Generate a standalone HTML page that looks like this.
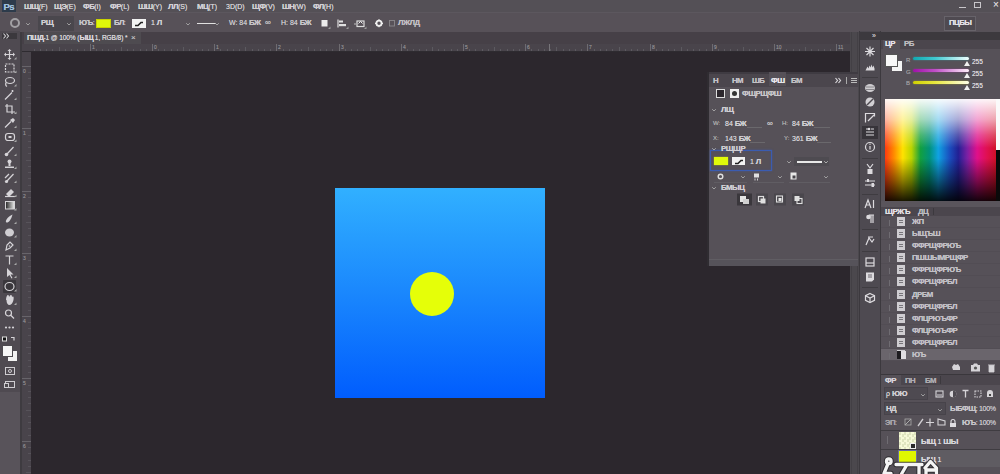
<!DOCTYPE html>
<html><head><meta charset="utf-8">
<style>
*{margin:0;padding:0;box-sizing:border-box}
html,body{width:1000px;height:474px;overflow:hidden;background:#2c272d;font-family:"Liberation Sans",sans-serif;position:relative}
.a{position:absolute}
.t{position:absolute;white-space:nowrap;text-shadow:0 0 .3px currentColor}
.c{font-size:1.12em;letter-spacing:-0.07em;font-weight:bold}
</style></head><body>
<div class="a" style="left:0px;top:0px;width:1000px;height:12px;background:#545056;"></div>
<div class="a" style="left:0px;top:12px;width:1000px;height:1px;background:#5c575e;"></div>
<div class="a" style="left:0px;top:13px;width:1000px;height:19px;background:#575158;"></div>
<div class="a" style="left:0px;top:32px;width:860px;height:20px;background:#464047;"></div>
<div class="a" style="left:0px;top:31px;width:22px;height:443px;background:#58535a;"></div>
<div class="a" style="left:0px;top:31px;width:20px;height:361px;background:#4f4a51;"></div>
<div class="a" style="left:22px;top:44px;width:9px;height:430px;background:#49444b;"></div>
<div class="a" style="left:22px;top:44px;width:828px;height:7px;background:#49444b;"></div>
<div class="a" style="left:31px;top:52px;width:819px;height:422px;background:#2c272d;"></div>
<div class="a" style="left:2px;top:0px;width:14px;height:12px;background:#2d3b4b;"></div>
<div class="t" style="left:3.5px;top:1.5px;font-size:9.5px;line-height:10.5px;color:#9fc0dc;font-weight:bold;letter-spacing:-0.6px;">Ps</div>
<div class="t" style="left:24px;top:3px;font-size:7px;line-height:8px;color:#d2d0d4;"><span class="c">ШЩ</span>(F)</div>
<div class="t" style="left:54px;top:3px;font-size:7px;line-height:8px;color:#d2d0d4;"><span class="c">ЩЭ</span>(E)</div>
<div class="t" style="left:83px;top:3px;font-size:7px;line-height:8px;color:#d2d0d4;"><span class="c">ФБ</span>(I)</div>
<div class="t" style="left:110px;top:3px;font-size:7px;line-height:8px;color:#d2d0d4;"><span class="c">ФР</span>(L)</div>
<div class="t" style="left:138px;top:3px;font-size:7px;line-height:8px;color:#d2d0d4;"><span class="c">ШШ</span>(Y)</div>
<div class="t" style="left:168px;top:3px;font-size:7px;line-height:8px;color:#d2d0d4;"><span class="c">ЛЛ</span>(S)</div>
<div class="t" style="left:197px;top:3px;font-size:7px;line-height:8px;color:#d2d0d4;"><span class="c">МЦ</span>(T)</div>
<div class="t" style="left:226px;top:3px;font-size:7px;line-height:8px;color:#d2d0d4;">3D(D)</div>
<div class="t" style="left:252px;top:3px;font-size:7px;line-height:8px;color:#d2d0d4;"><span class="c">ЩФ</span>(V)</div>
<div class="t" style="left:282px;top:3px;font-size:7px;line-height:8px;color:#d2d0d4;"><span class="c">ШН</span>(W)</div>
<div class="t" style="left:313px;top:3px;font-size:7px;line-height:8px;color:#d2d0d4;"><span class="c">ФЛ</span>(H)</div>
<div class="a" style="left:959px;top:7px;width:7px;height:1px;background:#c8c6ca;"></div>
<div class="a" style="left:974px;top:2px;width:7px;height:6px;background:none;border:1px solid #c8c6ca;"></div>
<div class="t" style="left:993px;top:-1px;font-size:10px;line-height:11px;color:#d0ced2;">×</div>
<div class="a" style="left:10px;top:18px;width:10px;height:10px;border-radius:50%;border:2.5px solid #a2a0a4;"></div>
<svg class="a" style="left:25px;top:19px" width="8" height="9" viewBox="0 0 8 9"><path d="M1.2 4.2L3 6L4.8 4.2" stroke="#aaa" stroke-width="0.9" fill="none"/></svg>
<div class="a" style="left:38px;top:16px;width:36px;height:15px;background:#4a474d;"></div>
<div class="t" style="left:41px;top:19px;font-size:7px;line-height:8px;color:#d0ced2;"><span class="c">РЩ</span></div>
<svg class="a" style="left:66px;top:19px" width="8" height="9" viewBox="0 0 8 9"><path d="M1.2 4.2L3 6L4.8 4.2" stroke="#aaa" stroke-width="0.9" fill="none"/></svg>
<div class="t" style="left:79px;top:19px;font-size:7px;line-height:8px;color:#c8c6ca;"><span class="c">ЮЪ</span>:</div>
<div class="a" style="left:96px;top:19px;width:15px;height:9px;background:#def80a;border:1px solid #c9d200;"></div>
<div class="t" style="left:114px;top:19px;font-size:7px;line-height:8px;color:#c8c6ca;"><span class="c">БЛ</span>:</div>
<div class="a" style="left:132px;top:19px;width:14px;height:9px;background:#f2f2f2;"></div>
<svg class="a" style="left:132px;top:19px;" width="14" height="9" viewBox="0 0 14 9"><path d="M3 6.5h3l3-3h2" stroke="#222" stroke-width="1.6" fill="none"/></svg>
<div class="t" style="left:151px;top:19px;font-size:7px;line-height:8px;color:#d0ced2;">1 <span class="c">Л</span></div>
<svg class="a" style="left:185px;top:19px" width="8" height="9" viewBox="0 0 8 9"><path d="M1.2 4.2L3 6L4.8 4.2" stroke="#aaa" stroke-width="0.9" fill="none"/></svg>
<div class="a" style="left:197px;top:23px;width:19px;height:1px;background:#e0e0e0;"></div>
<svg class="a" style="left:214px;top:19px" width="8" height="9" viewBox="0 0 8 9"><path d="M1.2 4.2L3 6L4.8 4.2" stroke="#aaa" stroke-width="0.9" fill="none"/></svg>
<div class="t" style="left:229px;top:19px;font-size:7px;line-height:8px;color:#c8c6ca;">W: 84 <span class="c">БЖ</span></div>
<div class="t" style="left:265px;top:18px;font-size:8px;line-height:9px;color:#c8c6ca;">∞</div>
<div class="t" style="left:281px;top:19px;font-size:7px;line-height:8px;color:#c8c6ca;">H: 84 <span class="c">БЖ</span></div>
<svg class="a" style="left:0px;top:0px;pointer-events:none;" width="1000" height="40" viewBox="0 0 1000 40"><rect x="321.5" y="20" width="6" height="6.5" fill="#ececec"/><path d="M328 29h2.5v-2.5z" fill="#999"/><path d="M338 19.5v8" stroke="#e0e0e0" stroke-width="1.2"/><rect x="339" y="20.5" width="4" height="2" fill="#e0e0e0"/><rect x="339" y="24" width="7" height="2.2" fill="#e0e0e0"/><path d="M346 29h2.5v-2.5z" fill="#999"/><rect x="357" y="21" width="7" height="5.5" fill="none" stroke="#dcdcdc" stroke-width="1.2"/><path d="M358.5 23.5l2-2 2 2" stroke="#eee" fill="none"/><circle cx="355" cy="24" r="0.8" fill="#ccc"/><path d="M364 29h2.5v-2.5z" fill="#999"/><circle cx="379" cy="23.3" r="2.6" fill="none" stroke="#f0f0f0" stroke-width="1.8"/><path d="M379 19.3v1.2M379 26.1v1.2M375 23.3h1.2M381.8 23.3h1.2" stroke="#f0f0f0" stroke-width="1.2"/><rect x="389.5" y="20.5" width="5" height="5.5" fill="none" stroke="#8a888c" stroke-width="0.9"/></svg>
<div class="t" style="left:398px;top:19px;font-size:7px;line-height:8px;color:#c0bec2;"><span class="c">ЛЖЛД</span></div>
<div class="a" style="left:944px;top:16px;width:32px;height:15px;background:#4f4a51;border:1px solid #67636a;"></div>
<div class="t" style="left:949px;top:19px;font-size:7px;line-height:8px;color:#e2e0e4;"><span class="c">ПЦБЫ</span></div>
<div class="a" style="left:24px;top:32px;width:117px;height:12px;background:#4e4b50;"></div>
<div class="t" style="left:27px;top:34px;font-size:6.6px;line-height:7.6px;color:#d8d6da;letter-spacing:-0.1px;"><span class="c">ПШД</span>-1 @ 100% (<span class="c">ЫЩ</span> 1, RGB/8) *</div>
<div class="t" style="left:131px;top:33px;font-size:8px;line-height:9px;color:#bbb;">×</div>
<div class="a" style="left:34px;top:49px;width:1px;height:2px;background:#5c5a60;"></div>
<div class="a" style="left:40px;top:49px;width:1px;height:2px;background:#5c5a60;"></div>
<div class="a" style="left:46px;top:49px;width:1px;height:2px;background:#5c5a60;"></div>
<div class="a" style="left:52px;top:49px;width:1px;height:2px;background:#5c5a60;"></div>
<div class="a" style="left:59px;top:47px;width:1px;height:4px;background:#5c5a60;"></div>
<div class="a" style="left:65px;top:49px;width:1px;height:2px;background:#5c5a60;"></div>
<div class="a" style="left:71px;top:49px;width:1px;height:2px;background:#5c5a60;"></div>
<div class="a" style="left:77px;top:49px;width:1px;height:2px;background:#5c5a60;"></div>
<div class="a" style="left:84px;top:49px;width:1px;height:2px;background:#5c5a60;"></div>
<div class="a" style="left:90px;top:44px;width:1px;height:7px;background:#6e6b70;"></div>
<div class="t" style="left:92px;top:44px;font-size:5px;line-height:6px;color:#8a888c;">1</div>
<div class="a" style="left:96px;top:49px;width:1px;height:2px;background:#5c5a60;"></div>
<div class="a" style="left:102px;top:49px;width:1px;height:2px;background:#5c5a60;"></div>
<div class="a" style="left:108px;top:49px;width:1px;height:2px;background:#5c5a60;"></div>
<div class="a" style="left:115px;top:49px;width:1px;height:2px;background:#5c5a60;"></div>
<div class="a" style="left:121px;top:47px;width:1px;height:4px;background:#5c5a60;"></div>
<div class="a" style="left:127px;top:49px;width:1px;height:2px;background:#5c5a60;"></div>
<div class="a" style="left:133px;top:49px;width:1px;height:2px;background:#5c5a60;"></div>
<div class="a" style="left:140px;top:49px;width:1px;height:2px;background:#5c5a60;"></div>
<div class="a" style="left:146px;top:49px;width:1px;height:2px;background:#5c5a60;"></div>
<div class="a" style="left:152px;top:44px;width:1px;height:7px;background:#6e6b70;"></div>
<div class="t" style="left:154px;top:44px;font-size:5px;line-height:6px;color:#8a888c;">0</div>
<div class="a" style="left:158px;top:49px;width:1px;height:2px;background:#5c5a60;"></div>
<div class="a" style="left:164px;top:49px;width:1px;height:2px;background:#5c5a60;"></div>
<div class="a" style="left:171px;top:49px;width:1px;height:2px;background:#5c5a60;"></div>
<div class="a" style="left:177px;top:49px;width:1px;height:2px;background:#5c5a60;"></div>
<div class="a" style="left:183px;top:47px;width:1px;height:4px;background:#5c5a60;"></div>
<div class="a" style="left:189px;top:49px;width:1px;height:2px;background:#5c5a60;"></div>
<div class="a" style="left:196px;top:49px;width:1px;height:2px;background:#5c5a60;"></div>
<div class="a" style="left:202px;top:49px;width:1px;height:2px;background:#5c5a60;"></div>
<div class="a" style="left:208px;top:49px;width:1px;height:2px;background:#5c5a60;"></div>
<div class="a" style="left:214px;top:44px;width:1px;height:7px;background:#6e6b70;"></div>
<div class="t" style="left:216px;top:44px;font-size:5px;line-height:6px;color:#8a888c;">1</div>
<div class="a" style="left:220px;top:49px;width:1px;height:2px;background:#5c5a60;"></div>
<div class="a" style="left:227px;top:49px;width:1px;height:2px;background:#5c5a60;"></div>
<div class="a" style="left:233px;top:49px;width:1px;height:2px;background:#5c5a60;"></div>
<div class="a" style="left:239px;top:49px;width:1px;height:2px;background:#5c5a60;"></div>
<div class="a" style="left:245px;top:47px;width:1px;height:4px;background:#5c5a60;"></div>
<div class="a" style="left:252px;top:49px;width:1px;height:2px;background:#5c5a60;"></div>
<div class="a" style="left:258px;top:49px;width:1px;height:2px;background:#5c5a60;"></div>
<div class="a" style="left:264px;top:49px;width:1px;height:2px;background:#5c5a60;"></div>
<div class="a" style="left:270px;top:49px;width:1px;height:2px;background:#5c5a60;"></div>
<div class="a" style="left:276px;top:44px;width:1px;height:7px;background:#6e6b70;"></div>
<div class="t" style="left:278px;top:44px;font-size:5px;line-height:6px;color:#8a888c;">2</div>
<div class="a" style="left:283px;top:49px;width:1px;height:2px;background:#5c5a60;"></div>
<div class="a" style="left:289px;top:49px;width:1px;height:2px;background:#5c5a60;"></div>
<div class="a" style="left:295px;top:49px;width:1px;height:2px;background:#5c5a60;"></div>
<div class="a" style="left:301px;top:49px;width:1px;height:2px;background:#5c5a60;"></div>
<div class="a" style="left:308px;top:47px;width:1px;height:4px;background:#5c5a60;"></div>
<div class="a" style="left:314px;top:49px;width:1px;height:2px;background:#5c5a60;"></div>
<div class="a" style="left:320px;top:49px;width:1px;height:2px;background:#5c5a60;"></div>
<div class="a" style="left:326px;top:49px;width:1px;height:2px;background:#5c5a60;"></div>
<div class="a" style="left:332px;top:49px;width:1px;height:2px;background:#5c5a60;"></div>
<div class="a" style="left:339px;top:44px;width:1px;height:7px;background:#6e6b70;"></div>
<div class="t" style="left:341px;top:44px;font-size:5px;line-height:6px;color:#8a888c;">3</div>
<div class="a" style="left:345px;top:49px;width:1px;height:2px;background:#5c5a60;"></div>
<div class="a" style="left:351px;top:49px;width:1px;height:2px;background:#5c5a60;"></div>
<div class="a" style="left:357px;top:49px;width:1px;height:2px;background:#5c5a60;"></div>
<div class="a" style="left:363px;top:49px;width:1px;height:2px;background:#5c5a60;"></div>
<div class="a" style="left:370px;top:47px;width:1px;height:4px;background:#5c5a60;"></div>
<div class="a" style="left:376px;top:49px;width:1px;height:2px;background:#5c5a60;"></div>
<div class="a" style="left:382px;top:49px;width:1px;height:2px;background:#5c5a60;"></div>
<div class="a" style="left:388px;top:49px;width:1px;height:2px;background:#5c5a60;"></div>
<div class="a" style="left:395px;top:49px;width:1px;height:2px;background:#5c5a60;"></div>
<div class="a" style="left:401px;top:44px;width:1px;height:7px;background:#6e6b70;"></div>
<div class="t" style="left:403px;top:44px;font-size:5px;line-height:6px;color:#8a888c;">4</div>
<div class="a" style="left:407px;top:49px;width:1px;height:2px;background:#5c5a60;"></div>
<div class="a" style="left:413px;top:49px;width:1px;height:2px;background:#5c5a60;"></div>
<div class="a" style="left:419px;top:49px;width:1px;height:2px;background:#5c5a60;"></div>
<div class="a" style="left:426px;top:49px;width:1px;height:2px;background:#5c5a60;"></div>
<div class="a" style="left:432px;top:47px;width:1px;height:4px;background:#5c5a60;"></div>
<div class="a" style="left:438px;top:49px;width:1px;height:2px;background:#5c5a60;"></div>
<div class="a" style="left:444px;top:49px;width:1px;height:2px;background:#5c5a60;"></div>
<div class="a" style="left:451px;top:49px;width:1px;height:2px;background:#5c5a60;"></div>
<div class="a" style="left:457px;top:49px;width:1px;height:2px;background:#5c5a60;"></div>
<div class="a" style="left:463px;top:44px;width:1px;height:7px;background:#6e6b70;"></div>
<div class="t" style="left:465px;top:44px;font-size:5px;line-height:6px;color:#8a888c;">5</div>
<div class="a" style="left:469px;top:49px;width:1px;height:2px;background:#5c5a60;"></div>
<div class="a" style="left:475px;top:49px;width:1px;height:2px;background:#5c5a60;"></div>
<div class="a" style="left:482px;top:49px;width:1px;height:2px;background:#5c5a60;"></div>
<div class="a" style="left:488px;top:49px;width:1px;height:2px;background:#5c5a60;"></div>
<div class="a" style="left:494px;top:47px;width:1px;height:4px;background:#5c5a60;"></div>
<div class="a" style="left:500px;top:49px;width:1px;height:2px;background:#5c5a60;"></div>
<div class="a" style="left:507px;top:49px;width:1px;height:2px;background:#5c5a60;"></div>
<div class="a" style="left:513px;top:49px;width:1px;height:2px;background:#5c5a60;"></div>
<div class="a" style="left:519px;top:49px;width:1px;height:2px;background:#5c5a60;"></div>
<div class="a" style="left:525px;top:44px;width:1px;height:7px;background:#6e6b70;"></div>
<div class="t" style="left:527px;top:44px;font-size:5px;line-height:6px;color:#8a888c;">6</div>
<div class="a" style="left:531px;top:49px;width:1px;height:2px;background:#5c5a60;"></div>
<div class="a" style="left:538px;top:49px;width:1px;height:2px;background:#5c5a60;"></div>
<div class="a" style="left:544px;top:49px;width:1px;height:2px;background:#5c5a60;"></div>
<div class="a" style="left:550px;top:49px;width:1px;height:2px;background:#5c5a60;"></div>
<div class="a" style="left:556px;top:47px;width:1px;height:4px;background:#5c5a60;"></div>
<div class="a" style="left:563px;top:49px;width:1px;height:2px;background:#5c5a60;"></div>
<div class="a" style="left:569px;top:49px;width:1px;height:2px;background:#5c5a60;"></div>
<div class="a" style="left:575px;top:49px;width:1px;height:2px;background:#5c5a60;"></div>
<div class="a" style="left:581px;top:49px;width:1px;height:2px;background:#5c5a60;"></div>
<div class="a" style="left:587px;top:44px;width:1px;height:7px;background:#6e6b70;"></div>
<div class="t" style="left:589px;top:44px;font-size:5px;line-height:6px;color:#8a888c;">7</div>
<div class="a" style="left:594px;top:49px;width:1px;height:2px;background:#5c5a60;"></div>
<div class="a" style="left:600px;top:49px;width:1px;height:2px;background:#5c5a60;"></div>
<div class="a" style="left:606px;top:49px;width:1px;height:2px;background:#5c5a60;"></div>
<div class="a" style="left:612px;top:49px;width:1px;height:2px;background:#5c5a60;"></div>
<div class="a" style="left:619px;top:47px;width:1px;height:4px;background:#5c5a60;"></div>
<div class="a" style="left:625px;top:49px;width:1px;height:2px;background:#5c5a60;"></div>
<div class="a" style="left:631px;top:49px;width:1px;height:2px;background:#5c5a60;"></div>
<div class="a" style="left:637px;top:49px;width:1px;height:2px;background:#5c5a60;"></div>
<div class="a" style="left:643px;top:49px;width:1px;height:2px;background:#5c5a60;"></div>
<div class="a" style="left:650px;top:44px;width:1px;height:7px;background:#6e6b70;"></div>
<div class="t" style="left:652px;top:44px;font-size:5px;line-height:6px;color:#8a888c;">8</div>
<div class="a" style="left:656px;top:49px;width:1px;height:2px;background:#5c5a60;"></div>
<div class="a" style="left:662px;top:49px;width:1px;height:2px;background:#5c5a60;"></div>
<div class="a" style="left:668px;top:49px;width:1px;height:2px;background:#5c5a60;"></div>
<div class="a" style="left:674px;top:49px;width:1px;height:2px;background:#5c5a60;"></div>
<div class="a" style="left:681px;top:47px;width:1px;height:4px;background:#5c5a60;"></div>
<div class="a" style="left:687px;top:49px;width:1px;height:2px;background:#5c5a60;"></div>
<div class="a" style="left:693px;top:49px;width:1px;height:2px;background:#5c5a60;"></div>
<div class="a" style="left:699px;top:49px;width:1px;height:2px;background:#5c5a60;"></div>
<div class="a" style="left:706px;top:49px;width:1px;height:2px;background:#5c5a60;"></div>
<div class="a" style="left:712px;top:44px;width:1px;height:7px;background:#6e6b70;"></div>
<div class="t" style="left:714px;top:44px;font-size:5px;line-height:6px;color:#8a888c;">9</div>
<div class="a" style="left:718px;top:49px;width:1px;height:2px;background:#5c5a60;"></div>
<div class="a" style="left:724px;top:49px;width:1px;height:2px;background:#5c5a60;"></div>
<div class="a" style="left:730px;top:49px;width:1px;height:2px;background:#5c5a60;"></div>
<div class="a" style="left:737px;top:49px;width:1px;height:2px;background:#5c5a60;"></div>
<div class="a" style="left:743px;top:47px;width:1px;height:4px;background:#5c5a60;"></div>
<div class="a" style="left:749px;top:49px;width:1px;height:2px;background:#5c5a60;"></div>
<div class="a" style="left:755px;top:49px;width:1px;height:2px;background:#5c5a60;"></div>
<div class="a" style="left:762px;top:49px;width:1px;height:2px;background:#5c5a60;"></div>
<div class="a" style="left:768px;top:49px;width:1px;height:2px;background:#5c5a60;"></div>
<div class="a" style="left:774px;top:44px;width:1px;height:7px;background:#6e6b70;"></div>
<div class="t" style="left:776px;top:44px;font-size:5px;line-height:6px;color:#8a888c;">10</div>
<div class="a" style="left:780px;top:49px;width:1px;height:2px;background:#5c5a60;"></div>
<div class="a" style="left:786px;top:49px;width:1px;height:2px;background:#5c5a60;"></div>
<div class="a" style="left:793px;top:49px;width:1px;height:2px;background:#5c5a60;"></div>
<div class="a" style="left:799px;top:49px;width:1px;height:2px;background:#5c5a60;"></div>
<div class="a" style="left:805px;top:47px;width:1px;height:4px;background:#5c5a60;"></div>
<div class="a" style="left:811px;top:49px;width:1px;height:2px;background:#5c5a60;"></div>
<div class="a" style="left:818px;top:49px;width:1px;height:2px;background:#5c5a60;"></div>
<div class="a" style="left:824px;top:49px;width:1px;height:2px;background:#5c5a60;"></div>
<div class="a" style="left:830px;top:49px;width:1px;height:2px;background:#5c5a60;"></div>
<div class="a" style="left:836px;top:44px;width:1px;height:7px;background:#6e6b70;"></div>
<div class="t" style="left:838px;top:44px;font-size:5px;line-height:6px;color:#8a888c;">11</div>
<div class="a" style="left:842px;top:49px;width:1px;height:2px;background:#5c5a60;"></div>
<div class="a" style="left:549px;top:44px;width:1px;height:7px;background:#77757a;"></div>
<div class="a" style="left:22px;top:51px;width:828px;height:1px;background:#2e2b30;"></div>
<div class="a" style="left:22px;top:66px;width:9px;height:1px;background:#67646a;"></div>
<div class="t" style="left:23px;top:68px;font-size:5px;line-height:6px;color:#8a888c;">0</div>
<div class="a" style="left:28px;top:72px;width:3px;height:1px;background:#57535a;"></div>
<div class="a" style="left:28px;top:78px;width:3px;height:1px;background:#57535a;"></div>
<div class="a" style="left:28px;top:85px;width:3px;height:1px;background:#57535a;"></div>
<div class="a" style="left:28px;top:91px;width:3px;height:1px;background:#57535a;"></div>
<div class="a" style="left:26px;top:97px;width:5px;height:1px;background:#57535a;"></div>
<div class="a" style="left:28px;top:103px;width:3px;height:1px;background:#57535a;"></div>
<div class="a" style="left:28px;top:110px;width:3px;height:1px;background:#57535a;"></div>
<div class="a" style="left:28px;top:116px;width:3px;height:1px;background:#57535a;"></div>
<div class="a" style="left:28px;top:122px;width:3px;height:1px;background:#57535a;"></div>
<div class="a" style="left:22px;top:128px;width:9px;height:1px;background:#67646a;"></div>
<div class="t" style="left:23px;top:130px;font-size:5px;line-height:6px;color:#8a888c;">1</div>
<div class="a" style="left:28px;top:135px;width:3px;height:1px;background:#57535a;"></div>
<div class="a" style="left:28px;top:141px;width:3px;height:1px;background:#57535a;"></div>
<div class="a" style="left:28px;top:147px;width:3px;height:1px;background:#57535a;"></div>
<div class="a" style="left:28px;top:153px;width:3px;height:1px;background:#57535a;"></div>
<div class="a" style="left:26px;top:160px;width:5px;height:1px;background:#57535a;"></div>
<div class="a" style="left:28px;top:166px;width:3px;height:1px;background:#57535a;"></div>
<div class="a" style="left:28px;top:172px;width:3px;height:1px;background:#57535a;"></div>
<div class="a" style="left:28px;top:178px;width:3px;height:1px;background:#57535a;"></div>
<div class="a" style="left:28px;top:185px;width:3px;height:1px;background:#57535a;"></div>
<div class="a" style="left:22px;top:191px;width:9px;height:1px;background:#67646a;"></div>
<div class="t" style="left:23px;top:193px;font-size:5px;line-height:6px;color:#8a888c;">2</div>
<div class="a" style="left:28px;top:197px;width:3px;height:1px;background:#57535a;"></div>
<div class="a" style="left:28px;top:203px;width:3px;height:1px;background:#57535a;"></div>
<div class="a" style="left:28px;top:210px;width:3px;height:1px;background:#57535a;"></div>
<div class="a" style="left:28px;top:216px;width:3px;height:1px;background:#57535a;"></div>
<div class="a" style="left:26px;top:222px;width:5px;height:1px;background:#57535a;"></div>
<div class="a" style="left:28px;top:228px;width:3px;height:1px;background:#57535a;"></div>
<div class="a" style="left:28px;top:235px;width:3px;height:1px;background:#57535a;"></div>
<div class="a" style="left:28px;top:241px;width:3px;height:1px;background:#57535a;"></div>
<div class="a" style="left:28px;top:247px;width:3px;height:1px;background:#57535a;"></div>
<div class="a" style="left:22px;top:253px;width:9px;height:1px;background:#67646a;"></div>
<div class="t" style="left:23px;top:255px;font-size:5px;line-height:6px;color:#8a888c;">3</div>
<div class="a" style="left:28px;top:260px;width:3px;height:1px;background:#57535a;"></div>
<div class="a" style="left:28px;top:266px;width:3px;height:1px;background:#57535a;"></div>
<div class="a" style="left:28px;top:272px;width:3px;height:1px;background:#57535a;"></div>
<div class="a" style="left:28px;top:278px;width:3px;height:1px;background:#57535a;"></div>
<div class="a" style="left:26px;top:285px;width:5px;height:1px;background:#57535a;"></div>
<div class="a" style="left:28px;top:291px;width:3px;height:1px;background:#57535a;"></div>
<div class="a" style="left:28px;top:297px;width:3px;height:1px;background:#57535a;"></div>
<div class="a" style="left:28px;top:303px;width:3px;height:1px;background:#57535a;"></div>
<div class="a" style="left:28px;top:310px;width:3px;height:1px;background:#57535a;"></div>
<div class="a" style="left:22px;top:316px;width:9px;height:1px;background:#67646a;"></div>
<div class="t" style="left:23px;top:318px;font-size:5px;line-height:6px;color:#8a888c;">4</div>
<div class="a" style="left:28px;top:322px;width:3px;height:1px;background:#57535a;"></div>
<div class="a" style="left:28px;top:328px;width:3px;height:1px;background:#57535a;"></div>
<div class="a" style="left:28px;top:335px;width:3px;height:1px;background:#57535a;"></div>
<div class="a" style="left:28px;top:341px;width:3px;height:1px;background:#57535a;"></div>
<div class="a" style="left:26px;top:347px;width:5px;height:1px;background:#57535a;"></div>
<div class="a" style="left:28px;top:353px;width:3px;height:1px;background:#57535a;"></div>
<div class="a" style="left:28px;top:360px;width:3px;height:1px;background:#57535a;"></div>
<div class="a" style="left:28px;top:366px;width:3px;height:1px;background:#57535a;"></div>
<div class="a" style="left:28px;top:372px;width:3px;height:1px;background:#57535a;"></div>
<div class="a" style="left:22px;top:378px;width:9px;height:1px;background:#67646a;"></div>
<div class="t" style="left:23px;top:380px;font-size:5px;line-height:6px;color:#8a888c;">5</div>
<div class="a" style="left:28px;top:385px;width:3px;height:1px;background:#57535a;"></div>
<div class="a" style="left:28px;top:391px;width:3px;height:1px;background:#57535a;"></div>
<div class="a" style="left:28px;top:397px;width:3px;height:1px;background:#57535a;"></div>
<div class="a" style="left:28px;top:403px;width:3px;height:1px;background:#57535a;"></div>
<div class="a" style="left:26px;top:410px;width:5px;height:1px;background:#57535a;"></div>
<div class="a" style="left:28px;top:416px;width:3px;height:1px;background:#57535a;"></div>
<div class="a" style="left:28px;top:422px;width:3px;height:1px;background:#57535a;"></div>
<div class="a" style="left:28px;top:428px;width:3px;height:1px;background:#57535a;"></div>
<div class="a" style="left:28px;top:435px;width:3px;height:1px;background:#57535a;"></div>
<div class="a" style="left:22px;top:441px;width:9px;height:1px;background:#67646a;"></div>
<div class="t" style="left:23px;top:443px;font-size:5px;line-height:6px;color:#8a888c;">6</div>
<div class="a" style="left:28px;top:447px;width:3px;height:1px;background:#57535a;"></div>
<div class="a" style="left:28px;top:453px;width:3px;height:1px;background:#57535a;"></div>
<div class="a" style="left:28px;top:460px;width:3px;height:1px;background:#57535a;"></div>
<div class="a" style="left:28px;top:466px;width:3px;height:1px;background:#57535a;"></div>
<div class="a" style="left:26px;top:472px;width:5px;height:1px;background:#57535a;"></div>
<div class="a" style="left:335px;top:188px;width:210px;height:210px;background:linear-gradient(#31b0ff,#1a87fd 50%,#005dfe);"></div>
<div class="a" style="left:410px;top:272px;width:44px;height:44px;border-radius:50%;background:#e5ff08"></div>
<div class="a" style="left:2px;top:33px;width:15px;height:6px;background:#3b383d;"></div>
<svg class="a" style="left:0px;top:30px;" width="20" height="12" viewBox="0 0 20 12"><path d="M3.5 3.5l2 2.5-2 2.5M6.5 3.5l2 2.5-2 2.5" stroke="#d0ced2" stroke-width="1.1" fill="none"/></svg>
<div class="a" style="left:20px;top:32px;width:2px;height:442px;background:#3e3b40;"></div>
<div class="a" style="left:3px;top:280px;width:13px;height:13px;background:#3a373c;border-radius:1px;"></div>
<svg class="a" style="left:0px;top:0px;" width="31" height="474" viewBox="0 0 31 474"><defs><linearGradient id="gr"><stop offset="0" stop-color="#222"/><stop offset="1" stop-color="#eee"/></linearGradient></defs><path d="M5 54.5H14M9.5 50.0V59.0" stroke="#d6d4d8" fill="none" stroke-width="1.2" stroke-width="1.6"/><path d="M9.5 49.0l-2 2h4zM9.5 60.0l-2-2h4zM4 54.5l2-2v4zM15 54.5l-2-2v4z" fill="#d6d4d8"/><rect x="5.5" y="64" width="8.5" height="8" stroke="#d6d4d8" fill="none" stroke-width="1.2" stroke-dasharray="2 1"/><ellipse cx="10" cy="80.5" rx="4.5" ry="3" stroke="#d6d4d8" fill="none" stroke-width="1.2"/><path d="M6 82.5q-1 3 1 4" stroke="#d6d4d8" fill="none" stroke-width="1.2"/><path d="M5 99.5L12 92.5" stroke="#d6d4d8" fill="none" stroke-width="1.2" stroke-width="2"/><path d="M12.5 90v2M11.5 91h2" stroke="#d6d4d8" fill="none" stroke-width="1.2"/><path d="M7 104V112H15M5 106H12V114" stroke="#d6d4d8" fill="none" stroke-width="1.2"/><path d="M5 127.5L11 121.5" stroke="#d6d4d8" fill="none" stroke-width="1.2" stroke-width="2"/><path d="M10 120l3-2 2 2-2 3z" fill="#d6d4d8"/><rect x="5.5" y="133.5" width="9" height="7" rx="2.5" stroke="#d6d4d8" fill="none" stroke-width="1.2" stroke-width="1.5"/><rect x="8.5" y="136" width="3" height="2" fill="#d6d4d8"/><path d="M7 154L13.5 147" stroke="#d6d4d8" fill="none" stroke-width="1.2" stroke-width="1.6"/><circle cx="6.5" cy="154.5" r="1.8" fill="#d6d4d8"/><circle cx="9.5" cy="161.5" r="2" fill="#d6d4d8"/><path d="M5 166.5h9v1.5h-9z M8.5 163h2v3h-2z" fill="#d6d4d8"/><path d="M7 181L13.5 174" stroke="#d6d4d8" fill="none" stroke-width="1.2" stroke-width="1.6"/><path d="M5 178L9 174" stroke="#d6d4d8" fill="none" stroke-width="1.2"/><circle cx="6.5" cy="181.5" r="1.6" fill="#d6d4d8"/><path d="M6 194l5-5 3 3-5 5z" fill="#d6d4d8"/><path d="M5 196.5H15" stroke="#d6d4d8" fill="none" stroke-width="1.2"/><rect x="5.5" y="201.5" width="9" height="7.5" fill="url(#gr)" stroke="#d6d4d8" stroke-width="1"/><path d="M12.5 214.5C9 216 5 220 6 222 7 224 11 221 12.5 214.5z" fill="#d6d4d8"/><ellipse cx="9.5" cy="232.5" rx="4.5" ry="4" fill="#cfcdd1"/><path d="M6 250l1-5 3-3 3 3-3 3z" stroke="#d6d4d8" fill="none" stroke-width="1.2"/><circle cx="9.5" cy="246" r="0.8" fill="#d6d4d8"/><path d="M5.5 256h8M9.5 256v8.5" stroke="#d6d4d8" fill="none" stroke-width="1.2" stroke-width="1.5"/><path d="M7 268v9l2.5-2 2 3.5 1-.5-2-3.5h3z" fill="#d6d4d8"/><ellipse cx="9.5" cy="286.5" rx="4.5" ry="4" stroke="#d6d4d8" fill="none" stroke-width="1.2" stroke-width="1.5"/><path d="M6 300c0-3 1-5 2-5s1 2 1 2 1-2 2-2 1 2 1 2 1-1 1.5 0 0 5-2 7-5 1-5-4z" fill="#d6d4d8"/><circle cx="8.5" cy="313" r="3" stroke="#d6d4d8" fill="none" stroke-width="1.2" stroke-width="1.4"/><path d="M10.5 315l3.5 3.5" stroke="#d6d4d8" fill="none" stroke-width="1.2" stroke-width="1.6"/><circle cx="6" cy="327.5" r="1.1" fill="#d6d4d8"/><circle cx="9.5" cy="327.5" r="1.1" fill="#d6d4d8"/><circle cx="13" cy="327.5" r="1.1" fill="#d6d4d8"/><rect x="2.5" y="337.0" width="4" height="4" fill="#111" stroke="#ddd" stroke-width="1"/><path d="M11 337.5h3v3" stroke="#d6d4d8" fill="none" stroke-width="1.2"/><path d="M14 59.5h2.5v-2.5z" fill="#aaa"/><path d="M14 73h2.5v-2.5z" fill="#aaa"/><path d="M14 86.5h2.5v-2.5z" fill="#aaa"/><path d="M14 100h2.5v-2.5z" fill="#aaa"/><path d="M14 114h2.5v-2.5z" fill="#aaa"/><path d="M14 128h2.5v-2.5z" fill="#aaa"/><path d="M14 142h2.5v-2.5z" fill="#aaa"/><path d="M14 156h2.5v-2.5z" fill="#aaa"/><path d="M14 169h2.5v-2.5z" fill="#aaa"/><path d="M14 183h2.5v-2.5z" fill="#aaa"/><path d="M14 197h2.5v-2.5z" fill="#aaa"/><path d="M14 210.5h2.5v-2.5z" fill="#aaa"/><path d="M14 224h2.5v-2.5z" fill="#aaa"/><path d="M14 237.5h2.5v-2.5z" fill="#aaa"/><path d="M14 251h2.5v-2.5z" fill="#aaa"/><path d="M14 265h2.5v-2.5z" fill="#aaa"/><path d="M14 278h2.5v-2.5z" fill="#aaa"/><path d="M14 291.5h2.5v-2.5z" fill="#aaa"/><path d="M14 305h2.5v-2.5z" fill="#aaa"/></svg>
<div class="a" style="left:8px;top:351px;width:9px;height:10px;background:#f2f2f2;"></div>
<div class="a" style="left:3px;top:346px;width:9px;height:10px;background:#f6f6f6;outline:1px solid #4d4a4f;"></div>
<div class="a" style="left:5px;top:367px;width:10px;height:8px;background:none;border:1px solid #cfcdd1;"></div>
<div class="a" style="left:8px;top:369px;width:4px;height:4px;border:1px solid #cfcdd1;border-radius:50%"></div>
<div class="a" style="left:5px;top:381px;width:10px;height:7px;background:none;border:1px solid #cfcdd1;"></div>
<div class="a" style="left:4px;top:383px;width:5px;height:5px;background:#4d4a4f;border:1px solid #cfcdd1;"></div>
<div class="a" style="left:850px;top:32px;width:10px;height:442px;background:#4b484d;"></div>
<div class="a" style="left:851px;top:32px;width:1px;height:442px;background:#434045;"></div>
<div class="a" style="left:857px;top:32px;width:1px;height:442px;background:#434045;"></div>
<div class="a" style="left:707px;top:72px;width:2px;height:194px;background:#2f2c31;"></div>
<div class="a" style="left:709px;top:72px;width:149px;height:194px;background:#565158;"></div>
<div class="a" style="left:709px;top:72px;width:149px;height:15px;background:#4b464d;"></div>
<div class="a" style="left:709px;top:72px;width:149px;height:2px;background:#3f3b42;"></div>
<div class="a" style="left:769px;top:72px;width:17px;height:14px;background:#565158;"></div>
<div class="t" style="left:713px;top:77px;font-size:7px;line-height:8px;color:#c4c2c6;"><span class="c">Н</span></div>
<div class="t" style="left:732px;top:77px;font-size:7px;line-height:8px;color:#c4c2c6;"><span class="c">НМ</span></div>
<div class="t" style="left:752px;top:77px;font-size:7px;line-height:8px;color:#c4c2c6;"><span class="c">ШБ</span></div>
<div class="t" style="left:771px;top:77px;font-size:7px;line-height:8px;color:#e8e6ea;"><span class="c">ФШ</span></div>
<div class="t" style="left:791px;top:77px;font-size:7px;line-height:8px;color:#c4c2c6;"><span class="c">БМ</span></div>
<svg class="a" style="left:834px;top:74px;" width="10" height="12" viewBox="0 0 10 12"><path d="M1.5 4l2 2.5-2 2.5M4.5 4l2 2.5-2 2.5" stroke="#d6d4d8" stroke-width="1.2" fill="none"/></svg>
<div class="a" style="left:846px;top:77px;width:1px;height:7px;background:#aaa;"></div>
<div class="a" style="left:851px;top:78px;width:6px;height:5px;background:none;border-top:1px solid #bbb;border-bottom:1px solid #bbb;"></div>
<div class="a" style="left:851px;top:80px;width:6px;height:1px;background:#bbb;"></div>
<div class="a" style="left:716px;top:89px;width:9px;height:9px;background:#2c272d;border:1px solid #ddd;"></div>
<div class="a" style="left:730px;top:89px;width:9px;height:9px;background:#eeeeee;"></div>
<div class="a" style="left:732px;top:91px;width:5px;height:5px;border-radius:50%;background:#333"></div>
<div class="t" style="left:742px;top:90px;font-size:7px;line-height:8px;color:#c8c6ca;"><span class="c">ФЩРЩФШ</span></div>
<svg class="a" style="left:711px;top:105px" width="8" height="9" viewBox="0 0 8 9"><path d="M1.2 4.2L3 6L4.8 4.2" stroke="#aaa" stroke-width="0.9" fill="none"/></svg>
<div class="t" style="left:721px;top:106px;font-size:7px;line-height:8px;color:#d0ced2;"><span class="c">ЛЩ</span></div>
<div class="t" style="left:713px;top:120px;font-size:6px;line-height:7px;color:#aaa;">W:</div>
<div class="t" style="left:725px;top:120px;font-size:7px;line-height:8px;color:#d0ced2;">84 <span class="c">БЖ</span></div>
<div class="a" style="left:747px;top:127px;width:15px;height:1px;background:#6a686c;"></div>
<div class="t" style="left:767px;top:119px;font-size:8px;line-height:9px;color:#c8c6ca;">∞</div>
<div class="t" style="left:782px;top:120px;font-size:6px;line-height:7px;color:#aaa;">H:</div>
<div class="t" style="left:792px;top:120px;font-size:7px;line-height:8px;color:#d0ced2;">84 <span class="c">БЖ</span></div>
<div class="a" style="left:814px;top:127px;width:16px;height:1px;background:#6a686c;"></div>
<div class="t" style="left:713px;top:135px;font-size:6px;line-height:7px;color:#aaa;">X:</div>
<div class="t" style="left:725px;top:135px;font-size:7px;line-height:8px;color:#d0ced2;">143 <span class="c">БЖ</span></div>
<div class="a" style="left:750px;top:142px;width:15px;height:1px;background:#6a686c;"></div>
<div class="t" style="left:784px;top:135px;font-size:6px;line-height:7px;color:#aaa;">Y:</div>
<div class="t" style="left:792px;top:135px;font-size:7px;line-height:8px;color:#d0ced2;">361 <span class="c">БЖ</span></div>
<div class="a" style="left:817px;top:142px;width:14px;height:1px;background:#6a686c;"></div>
<div class="a" style="left:710px;top:150px;width:62px;height:21px;background:none;border:1.5px solid #3b5cb0;box-shadow:0 0 2px rgba(60,90,190,.6), inset 0 0 2px rgba(60,90,190,.4);"></div>
<svg class="a" style="left:711px;top:144px" width="8" height="9" viewBox="0 0 8 9"><path d="M1.2 4.2L3 6L4.8 4.2" stroke="#aaa" stroke-width="0.9" fill="none"/></svg>
<div class="t" style="left:721px;top:145px;font-size:7px;line-height:8px;color:#d0ced2;"><span class="c">РЩЩР</span></div>
<div class="a" style="left:714px;top:157px;width:14px;height:8px;background:#e0fa0a;box-shadow:0 0 1px #c8d400;"></div>
<div class="a" style="left:732px;top:157px;width:13px;height:8px;background:#f2f2f2;"></div>
<svg class="a" style="left:0px;top:0px;pointer-events:none;" width="1000" height="474" viewBox="0 0 1000 474"><path d="M735 163.5h3l3-3h2" stroke="#222" stroke-width="1.6" fill="none"/><circle cx="720.5" cy="176.5" r="2.3" fill="none" stroke="#e0e0e0" stroke-width="1.4"/><rect x="754" y="173.5" width="5" height="4" fill="#e0e0e0"/><path d="M755 178.5v2M757.5 178.5v2" stroke="#ddd" stroke-width="0.9"/><rect x="790.5" y="172.5" width="6" height="7" fill="#e8e8e8"/><rect x="792.5" y="175.5" width="3" height="3" fill="#47444a"/><rect x="737" y="193.5" width="15" height="12" fill="#3a373c"/><rect x="756" y="193.5" width="12" height="12" fill="#4a474d"/><rect x="774" y="193.5" width="12" height="12" fill="#4a474d"/><rect x="792" y="193.5" width="12" height="12" fill="#4a474d"/><rect x="740" y="196" width="6" height="6" fill="#e4e4e4"/><rect x="743" y="199" width="6" height="5" fill="#d0d0d0"/><rect x="758.5" y="196.5" width="5" height="5" fill="none" stroke="#ddd" stroke-width="1.2"/><rect x="760.5" y="198.5" width="5" height="5" fill="#e0e0e0"/><rect x="776.5" y="196" width="6" height="6" fill="none" stroke="#ddd" stroke-width="1.1"/><rect x="778.5" y="198" width="3" height="3" fill="#e8e8e8"/><rect x="794.5" y="196" width="5" height="5" fill="#e0e0e0"/><rect x="797" y="198.5" width="5" height="5" fill="none" stroke="#e0e0e0" stroke-width="1.1"/></svg>
<div class="t" style="left:750px;top:158px;font-size:7px;line-height:8px;color:#d0ced2;">1 <span class="c">Л</span></div>
<svg class="a" style="left:786px;top:157px" width="8" height="9" viewBox="0 0 8 9"><path d="M1.2 4.2L3 6L4.8 4.2" stroke="#aaa" stroke-width="0.9" fill="none"/></svg>
<div class="a" style="left:794px;top:157px;width:35px;height:9px;background:#4e4b51;"></div>
<div class="a" style="left:797px;top:161px;width:25px;height:1.5px;background:#e8e8e8;"></div>
<svg class="a" style="left:823px;top:157px" width="8" height="9" viewBox="0 0 8 9"><path d="M1.2 4.2L3 6L4.8 4.2" stroke="#bbb" stroke-width="0.9" fill="none"/></svg>
<div class="a" style="left:714px;top:182px;width:33px;height:1px;background:#605d63;"></div>
<div class="a" style="left:753px;top:182px;width:31px;height:1px;background:#605d63;"></div>
<div class="a" style="left:789px;top:182px;width:41px;height:1px;background:#605d63;"></div>
<svg class="a" style="left:740px;top:172px" width="8" height="9" viewBox="0 0 8 9"><path d="M1.2 4.2L3 6L4.8 4.2" stroke="#aaa" stroke-width="0.9" fill="none"/></svg>
<svg class="a" style="left:777px;top:172px" width="8" height="9" viewBox="0 0 8 9"><path d="M1.2 4.2L3 6L4.8 4.2" stroke="#aaa" stroke-width="0.9" fill="none"/></svg>
<svg class="a" style="left:823px;top:172px" width="8" height="9" viewBox="0 0 8 9"><path d="M1.2 4.2L3 6L4.8 4.2" stroke="#aaa" stroke-width="0.9" fill="none"/></svg>
<svg class="a" style="left:711px;top:183px" width="8" height="9" viewBox="0 0 8 9"><path d="M1.2 4.2L3 6L4.8 4.2" stroke="#aaa" stroke-width="0.9" fill="none"/></svg>
<div class="t" style="left:721px;top:184px;font-size:7px;line-height:8px;color:#d0ced2;"><span class="c">БМЫЦ</span></div>
<div class="a" style="left:709px;top:259px;width:149px;height:1px;background:#605d63;"></div>
<div class="a" style="left:709px;top:260px;width:149px;height:6px;background:#56535a;"></div>
<div class="a" style="left:860px;top:31px;width:20px;height:443px;background:#4e4a51;"></div>
<div class="a" style="left:859px;top:31px;width:1px;height:443px;background:#3c393e;"></div>
<div class="a" style="left:880px;top:31px;width:1px;height:443px;background:#3c393e;"></div>
<div class="t" style="left:873px;top:34px;font-size:7px;line-height:8px;color:#aaa;">«</div>
<div class="a" style="left:862px;top:126px;width:16px;height:13px;background:#37343a;"></div>
<svg class="a" style="left:0px;top:0px;pointer-events:none;" width="1000" height="474" viewBox="0 0 1000 474"><path d="M865 51.5h10M870 46.5v10M866.5 48.0l7 7M873.5 48.0l-7 7" stroke="#dcdade" fill="none" stroke-width="1.2"/><path d="M865.5 70.5h9v-2l-1-3-1 2-1-3-1 3-1-2-1 3-1-2-1 2z" fill="#dcdade"/><ellipse cx="870" cy="88" rx="5" ry="4" fill="#cfcdd1"/><path d="M866 87h8M866 89.5h8" stroke="#77757a" stroke-width="0.8"/><circle cx="870" cy="102" r="4.5" fill="#d2d0d4"/><path d="M867 105l6-6" stroke="#4e4a51" stroke-width="1.5"/><path d="M865.5 122.5v-9h9v3" stroke="#dcdade" fill="none" stroke-width="1.2"/><path d="M868 121l6-6" stroke="#dcdade" fill="none" stroke-width="1.2" stroke-width="1.6"/><path d="M866 129h3M871 129h3M866 132h8M866 135h8" stroke="#dcdade" fill="none" stroke-width="1.2"/><circle cx="869" cy="129" r="1.3" fill="#dcdade"/><circle cx="870" cy="147" r="4.5" stroke="#dcdade" fill="none" stroke-width="1.2"/><path d="M870 146v3.5" stroke="#dcdade" fill="none" stroke-width="1.2"/><circle cx="870" cy="144.2" r="0.7" fill="#dcdade"/><path d="M867 164l3 4 3-4" stroke="#dcdade" fill="none" stroke-width="1.2"/><rect x="867.5" y="169" width="5" height="5" fill="#dcdade"/><path d="M865 181h10M865 185h10" stroke="#dcdade" fill="none" stroke-width="1.2"/><rect x="867" y="179" width="2" height="3" fill="#dcdade"/><rect x="871.5" y="183" width="2.5" height="4" fill="#dcdade"/><path d="M865 208l3-8 3 8M866.5 205h3M873.5 200v8" stroke="#dcdade" fill="none" stroke-width="1.2"/><path d="M869 215h5M871 215v8M873 215v8" stroke="#dcdade" fill="none" stroke-width="1.2"/><circle cx="868.5" cy="217" r="2.3" fill="#dcdade"/><path d="M866 245l3-7 3 4 2-3M868 237h5" stroke="#dcdade" fill="none" stroke-width="1.2"/><rect x="866" y="258" width="8" height="8" stroke="#dcdade" fill="none" stroke-width="1.2"/><path d="M866 263h8" stroke="#dcdade" fill="none" stroke-width="1.2"/><path d="M866 272.5h8v7l-2 2h-6z" fill="#dcdade"/><path d="M868 275h4M868 277h4" stroke="#4e4a51" stroke-width="0.8"/><path d="M870 293.5l4.5 2.2v4.6l-4.5 2.2-4.5-2.2v-4.6z" stroke="#dcdade" fill="none" stroke-width="1.2"/><path d="M865.5 295.7l4.5 2.3 4.5-2.3M870 298v4.5" stroke="#dcdade" fill="none" stroke-width="1.2"/></svg>
<div class="a" style="left:862px;top:77px;width:16px;height:1px;background:#3f3c41;"></div>
<div class="a" style="left:862px;top:158px;width:16px;height:1px;background:#3f3c41;"></div>
<div class="a" style="left:862px;top:194px;width:16px;height:1px;background:#3f3c41;"></div>
<div class="a" style="left:862px;top:229px;width:16px;height:1px;background:#3f3c41;"></div>
<div class="a" style="left:862px;top:251px;width:16px;height:1px;background:#3f3c41;"></div>
<div class="a" style="left:862px;top:287px;width:16px;height:1px;background:#3f3c41;"></div>
<div class="a" style="left:881px;top:31px;width:119px;height:443px;background:#565158;"></div>
<div class="a" style="left:860px;top:32px;width:140px;height:8px;background:#3c393e;"></div>
<div class="t" style="left:872px;top:32px;font-size:7px;line-height:8px;color:#bdbbbf;">»</div>
<div class="a" style="left:881px;top:40px;width:119px;height:9px;background:#4b464d;"></div>
<div class="a" style="left:883px;top:40px;width:17px;height:9px;background:#565158;"></div>
<div class="t" style="left:885px;top:40px;font-size:7px;line-height:8px;color:#e6e4e8;"><span class="c">ЦР</span></div>
<div class="t" style="left:904px;top:40px;font-size:7px;line-height:8px;color:#bdbbbf;"><span class="c">РБ</span></div>
<div class="a" style="left:892px;top:61px;width:10px;height:10px;background:#f4f4f4;"></div>
<div class="a" style="left:886px;top:55px;width:11px;height:11px;background:#f8f8f8;outline:1px solid #555;"></div>
<div class="t" style="left:906px;top:57px;font-size:6px;line-height:7px;color:#9a989c;">R</div>
<div class="t" style="left:906px;top:69px;font-size:6px;line-height:7px;color:#9a989c;">G</div>
<div class="t" style="left:906px;top:80px;font-size:6px;line-height:7px;color:#9a989c;">B</div>
<div class="a" style="left:913px;top:57px;width:56px;height:3px;background:linear-gradient(to right,#10a8b0,#40c8d0 40%,#f0ffff);border-radius:1.5px;box-shadow:0 0 2px rgba(40,200,210,.5);"></div>
<div class="a" style="left:913px;top:69px;width:56px;height:3px;background:linear-gradient(to right,#a010a8,#c050c8 40%,#fff0fa);border-radius:1.5px;box-shadow:0 0 2px rgba(200,40,200,.5);"></div>
<div class="a" style="left:913px;top:81px;width:56px;height:3px;background:linear-gradient(to right,#d0d000,#e8e840 40%,#ffffe8);border-radius:1.5px;box-shadow:0 0 2px rgba(220,220,0,.5);"></div>
<div class="a" style="left:964px;top:61px;width:0;height:0;border-left:3.5px solid transparent;border-right:3.5px solid transparent;border-bottom:5px solid #f0f0f0"></div>
<div class="a" style="left:964px;top:73px;width:0;height:0;border-left:3.5px solid transparent;border-right:3.5px solid transparent;border-bottom:5px solid #f0f0f0"></div>
<div class="a" style="left:964px;top:85px;width:0;height:0;border-left:3.5px solid transparent;border-right:3.5px solid transparent;border-bottom:5px solid #f0f0f0"></div>
<div class="t" style="left:972px;top:58px;font-size:6.5px;line-height:7.5px;color:#d8d6da;">255</div>
<div class="t" style="left:972px;top:70px;font-size:6.5px;line-height:7.5px;color:#d8d6da;">255</div>
<div class="t" style="left:972px;top:82px;font-size:6.5px;line-height:7.5px;color:#d8d6da;">255</div>
<div class="a" style="left:885px;top:99px;width:111px;height:102px;background:linear-gradient(to bottom,rgba(255,255,255,.96),rgba(255,255,255,.62) 20%,rgba(255,255,255,.25) 35%,rgba(255,255,255,0) 48%,rgba(0,0,0,0) 58%,rgba(0,0,0,.45) 80%,rgba(0,0,0,.9)),linear-gradient(to right,#ff3a10,#ff8a00 8%,#ffe200 16%,#b8d400 24%,#12a040 32%,#00927a 40%,#10a2e2 48%,#1a50c0 58%,#222094 66%,#7a20a4 74%,#e0108a 83%,#e01050 92%,#d01028);"></div>
<div class="a" style="left:996px;top:99px;width:4px;height:51px;background:#fafafa;"></div>
<div class="a" style="left:996px;top:150px;width:4px;height:51px;background:#0a0a0a;"></div>
<div class="a" style="left:881px;top:201px;width:119px;height:6px;background:#5a555c;"></div>
<div class="a" style="left:881px;top:207px;width:119px;height:9px;background:#4b464d;"></div>
<div class="a" style="left:933px;top:208px;width:1px;height:7px;background:#3c393e;"></div>
<div class="t" style="left:885px;top:208px;font-size:7px;line-height:8px;color:#e2e0e4;"><span class="c">ЩРЖЪ</span></div>
<div class="t" style="left:918px;top:208px;font-size:7px;line-height:8px;color:#bdbbbf;"><span class="c">ДЦ</span></div>
<div class="a" style="left:881px;top:227px;width:119px;height:1px;background:#524d54;"></div>
<div class="a" style="left:889px;top:220px;width:1px;height:6px;background:#6f6c72;"></div>
<div class="a" style="left:897px;top:217px;width:8px;height:9px;background:#cfcdd1;"></div>
<div class="a" style="left:899px;top:220px;width:4px;height:1px;background:#77757a;"></div>
<div class="a" style="left:899px;top:222px;width:4px;height:1px;background:#77757a;"></div>
<div class="t" style="left:912px;top:218px;font-size:7px;line-height:8px;color:#c2c0c6;"><span class="c">ЖП</span></div>
<div class="a" style="left:881px;top:239px;width:119px;height:1px;background:#524d54;"></div>
<div class="a" style="left:889px;top:232px;width:1px;height:6px;background:#6f6c72;"></div>
<div class="a" style="left:897px;top:229px;width:8px;height:9px;background:#cfcdd1;"></div>
<div class="a" style="left:899px;top:232px;width:4px;height:1px;background:#77757a;"></div>
<div class="a" style="left:899px;top:234px;width:4px;height:1px;background:#77757a;"></div>
<div class="t" style="left:912px;top:230px;font-size:7px;line-height:8px;color:#c2c0c6;"><span class="c">ЫЩЪШ</span></div>
<div class="a" style="left:881px;top:251px;width:119px;height:1px;background:#524d54;"></div>
<div class="a" style="left:889px;top:244px;width:1px;height:6px;background:#6f6c72;"></div>
<div class="a" style="left:897px;top:241px;width:8px;height:9px;background:#cfcdd1;"></div>
<div class="a" style="left:899px;top:244px;width:4px;height:1px;background:#77757a;"></div>
<div class="a" style="left:899px;top:246px;width:4px;height:1px;background:#77757a;"></div>
<div class="t" style="left:912px;top:242px;font-size:7px;line-height:8px;color:#c2c0c6;"><span class="c">ФФРЩФРЮЪ</span></div>
<div class="a" style="left:881px;top:263px;width:119px;height:1px;background:#524d54;"></div>
<div class="a" style="left:889px;top:256px;width:1px;height:6px;background:#6f6c72;"></div>
<div class="a" style="left:897px;top:253px;width:8px;height:9px;background:#cfcdd1;"></div>
<div class="a" style="left:899px;top:256px;width:4px;height:1px;background:#77757a;"></div>
<div class="a" style="left:899px;top:258px;width:4px;height:1px;background:#77757a;"></div>
<div class="t" style="left:912px;top:254px;font-size:7px;line-height:8px;color:#c2c0c6;"><span class="c">ПШШЫМРЩФР</span></div>
<div class="a" style="left:881px;top:275px;width:119px;height:1px;background:#524d54;"></div>
<div class="a" style="left:889px;top:268px;width:1px;height:6px;background:#6f6c72;"></div>
<div class="a" style="left:897px;top:265px;width:8px;height:9px;background:#cfcdd1;"></div>
<div class="a" style="left:899px;top:268px;width:4px;height:1px;background:#77757a;"></div>
<div class="a" style="left:899px;top:270px;width:4px;height:1px;background:#77757a;"></div>
<div class="t" style="left:912px;top:266px;font-size:7px;line-height:8px;color:#c2c0c6;"><span class="c">ФФРЩФРЮЪ</span></div>
<div class="a" style="left:881px;top:287px;width:119px;height:1px;background:#524d54;"></div>
<div class="a" style="left:889px;top:280px;width:1px;height:6px;background:#6f6c72;"></div>
<div class="a" style="left:897px;top:277px;width:8px;height:9px;background:#cfcdd1;"></div>
<div class="a" style="left:899px;top:280px;width:4px;height:1px;background:#77757a;"></div>
<div class="a" style="left:899px;top:282px;width:4px;height:1px;background:#77757a;"></div>
<div class="t" style="left:912px;top:278px;font-size:7px;line-height:8px;color:#c2c0c6;"><span class="c">ФФРЩФРБЛ</span></div>
<div class="a" style="left:881px;top:300px;width:119px;height:1px;background:#524d54;"></div>
<div class="a" style="left:889px;top:293px;width:1px;height:6px;background:#6f6c72;"></div>
<div class="a" style="left:897px;top:290px;width:8px;height:9px;background:#cfcdd1;"></div>
<div class="a" style="left:899px;top:293px;width:4px;height:1px;background:#77757a;"></div>
<div class="a" style="left:899px;top:295px;width:4px;height:1px;background:#77757a;"></div>
<div class="t" style="left:912px;top:291px;font-size:7px;line-height:8px;color:#c2c0c6;"><span class="c">ДРБМ</span></div>
<div class="a" style="left:881px;top:312px;width:119px;height:1px;background:#524d54;"></div>
<div class="a" style="left:889px;top:305px;width:1px;height:6px;background:#6f6c72;"></div>
<div class="a" style="left:897px;top:302px;width:8px;height:9px;background:#cfcdd1;"></div>
<div class="a" style="left:899px;top:305px;width:4px;height:1px;background:#77757a;"></div>
<div class="a" style="left:899px;top:307px;width:4px;height:1px;background:#77757a;"></div>
<div class="t" style="left:912px;top:303px;font-size:7px;line-height:8px;color:#c2c0c6;"><span class="c">ФФРЩФРБЛ</span></div>
<div class="a" style="left:881px;top:324px;width:119px;height:1px;background:#524d54;"></div>
<div class="a" style="left:889px;top:317px;width:1px;height:6px;background:#6f6c72;"></div>
<div class="a" style="left:897px;top:314px;width:8px;height:9px;background:#cfcdd1;"></div>
<div class="a" style="left:899px;top:317px;width:4px;height:1px;background:#77757a;"></div>
<div class="a" style="left:899px;top:319px;width:4px;height:1px;background:#77757a;"></div>
<div class="t" style="left:912px;top:315px;font-size:7px;line-height:8px;color:#c2c0c6;"><span class="c">ФЛЦРЮЪФР</span></div>
<div class="a" style="left:881px;top:336px;width:119px;height:1px;background:#524d54;"></div>
<div class="a" style="left:889px;top:329px;width:1px;height:6px;background:#6f6c72;"></div>
<div class="a" style="left:897px;top:326px;width:8px;height:9px;background:#cfcdd1;"></div>
<div class="a" style="left:899px;top:329px;width:4px;height:1px;background:#77757a;"></div>
<div class="a" style="left:899px;top:331px;width:4px;height:1px;background:#77757a;"></div>
<div class="t" style="left:912px;top:327px;font-size:7px;line-height:8px;color:#c2c0c6;"><span class="c">ФЛЦРЮЪФР</span></div>
<div class="a" style="left:881px;top:348px;width:119px;height:1px;background:#524d54;"></div>
<div class="a" style="left:889px;top:341px;width:1px;height:6px;background:#6f6c72;"></div>
<div class="a" style="left:897px;top:338px;width:8px;height:9px;background:#cfcdd1;"></div>
<div class="a" style="left:899px;top:341px;width:4px;height:1px;background:#77757a;"></div>
<div class="a" style="left:899px;top:343px;width:4px;height:1px;background:#77757a;"></div>
<div class="t" style="left:912px;top:339px;font-size:7px;line-height:8px;color:#c2c0c6;"><span class="c">ФФРЩФРБЛ</span></div>
<div class="a" style="left:881px;top:349px;width:119px;height:12px;background:#6a656c;"></div>
<div class="a" style="left:881px;top:360px;width:119px;height:1px;background:#524d54;"></div>
<div class="a" style="left:889px;top:353px;width:1px;height:6px;background:#6f6c72;"></div>
<div class="a" style="left:897px;top:350px;width:8px;height:9px;background:#cfcdd1;"></div>
<div class="a" style="left:899px;top:353px;width:4px;height:1px;background:#77757a;"></div>
<div class="a" style="left:899px;top:355px;width:4px;height:1px;background:#77757a;"></div>
<div class="t" style="left:912px;top:351px;font-size:7px;line-height:8px;color:#c2c0c6;"><span class="c">ЮЪ</span></div>
<div class="a" style="left:881px;top:361px;width:119px;height:13px;background:#504b52;"></div>
<div class="a" style="left:897px;top:351px;width:4px;height:8px;background:#1e1c20;"></div>
<div class="a" style="left:901px;top:351px;width:5px;height:8px;background:#e0dee2;"></div>
<svg class="a" style="left:950px;top:362px;" width="50" height="12" viewBox="0 0 50 12"><path d="M3 8h7v-3l-2-3-2 1-2-1-2 3z" fill="#d6d4d8"/><path d="M21 3h2l1-1.5h3l1 1.5h2v6.5h-9z" fill="#d6d4d8"/><circle cx="25.5" cy="6" r="1.6" fill="#555"/><path d="M38 3h7M39 3.5h5v6.5h-5z" fill="#d6d4d8" stroke="#d6d4d8" stroke-width="0.8"/></svg>
<div class="a" style="left:881px;top:374px;width:119px;height:1px;background:#3a373c;"></div>
<div class="a" style="left:881px;top:375px;width:119px;height:10px;background:#4b464d;"></div>
<div class="a" style="left:881px;top:375px;width:20px;height:10px;background:#565158;"></div>
<div class="t" style="left:885px;top:377px;font-size:7px;line-height:8px;color:#d6d4d8;"><span class="c">ФР</span></div>
<div class="t" style="left:905px;top:377px;font-size:7px;line-height:8px;color:#aeacb0;"><span class="c">ПН</span></div>
<div class="t" style="left:925px;top:377px;font-size:7px;line-height:8px;color:#aeacb0;"><span class="c">БМ</span></div>
<div class="a" style="left:940px;top:376px;width:1px;height:8px;background:#3c393e;"></div>
<div class="a" style="left:882px;top:386px;width:118px;height:44px;background:#565158;"></div>
<div class="a" style="left:884px;top:387px;width:44px;height:13px;background:#4e4a51;border:1px solid #47434a;"></div>
<div class="t" style="left:886px;top:390px;font-size:7px;line-height:8px;color:#d0ced2;">ρ <span class="c">ЮЮ</span></div>
<svg class="a" style="left:920px;top:390px" width="8" height="9" viewBox="0 0 8 9"><path d="M1.2 4.2L3 6L4.8 4.2" stroke="#aaa" stroke-width="0.9" fill="none"/></svg>
<svg class="a" style="left:0px;top:0px;pointer-events:none;" width="1000" height="474" viewBox="0 0 1000 474"><rect x="936" y="391" width="7" height="6" fill="none" stroke="#d6d4d8" stroke-width="1.1"/><path d="M937 395h5" stroke="#d6d4d8"/><circle cx="953" cy="394" r="3.3" fill="#d6d4d8"/><path d="M953 390.7v6.6a3.3 3.3 0 0 0 0-6.6z" fill="#4e4a51"/><path d="M962.5 390.5h6M965.5 390.5v7" stroke="#d6d4d8" stroke-width="1.3"/><rect x="975" y="391" width="6" height="6" fill="none" stroke="#d6d4d8" stroke-width="1.1" stroke-dasharray="1.5 1"/><path d="M987 397v-4a3 3 0 0 1 6 0v4z" fill="#d6d4d8"/><rect x="989" y="394" width="2" height="2" fill="#444"/><path d="M905 425l6-6" stroke="#aaa" stroke-width="1"/><rect x="905" y="419" width="6" height="6" fill="none" stroke="#aaa" stroke-width="0.8"/><path d="M918 426l5-7" stroke="#d0ced2" stroke-width="1.3"/><path d="M930 418.5v8M926 422.5h8" stroke="#d6d4d8" stroke-width="1.2"/><path d="M938 419v6h7v-4z" fill="none" stroke="#d6d4d8" stroke-width="1.1"/><path d="M950 427v-4h6v4z" fill="#e0dee2"/><path d="M951 423v-1.5a2 2 0 0 1 4 0v1.5" fill="none" stroke="#e0dee2" stroke-width="1.1"/></svg>
<div class="a" style="left:884px;top:402px;width:62px;height:13px;background:#4e4a51;border:1px solid #47434a;"></div>
<div class="t" style="left:886px;top:405px;font-size:7px;line-height:8px;color:#d0ced2;"><span class="c">НД</span></div>
<svg class="a" style="left:937px;top:405px" width="8" height="9" viewBox="0 0 8 9"><path d="M1.2 4.2L3 6L4.8 4.2" stroke="#aaa" stroke-width="0.9" fill="none"/></svg>
<div class="t" style="left:950px;top:405px;font-size:7px;line-height:8px;color:#c8c6ca;letter-spacing:-0.3px;"><span class="c">ЫБФЩ</span>: 100%</div>
<div class="t" style="left:885px;top:419px;font-size:7px;line-height:8px;color:#a8a6aa;"><span class="c">ЭП</span>:</div>
<div class="t" style="left:962px;top:419px;font-size:7px;line-height:8px;color:#c8c6ca;letter-spacing:-0.3px;"><span class="c">ЮЪ</span>: 100%</div>
<div class="a" style="left:881px;top:430px;width:119px;height:1px;background:#3f3c41;"></div>
<div class="a" style="left:882px;top:431px;width:118px;height:18px;background:#565158;"></div>
<div class="a" style="left:887px;top:436px;width:1px;height:8px;background:#6f6c72;"></div>
<div class="a" style="left:899px;top:432px;width:17px;height:17px;background:repeating-conic-gradient(#f6f9d8 0 25%,#dfe5bf 0 50%) 0 0/5px 5px;"></div>
<div class="a" style="left:910px;top:443px;width:6px;height:6px;background:#2a2a2a;border:1px solid #eee;"></div>
<div class="t" style="left:921px;top:438px;font-size:7px;line-height:8px;color:#d8d6da;"><span class="c">ЫЩ</span> 1 <span class="c">ШЫ</span></div>
<div class="a" style="left:881px;top:449px;width:119px;height:1px;background:#3f3c41;"></div>
<div class="a" style="left:917px;top:450px;width:83px;height:17px;background:#5f5c62;"></div>
<div class="a" style="left:898px;top:450px;width:19px;height:14px;background:#6a6fa0;"></div>
<div class="a" style="left:899px;top:451px;width:17px;height:12px;background:#e0f800;"></div>
<div class="t" style="left:921px;top:456px;font-size:7px;line-height:8px;color:#d8d6da;"><span class="c">ЫЩ</span> 1</div>
<svg class="a" style="left:0px;top:0px;pointer-events:none;" width="1000" height="474" viewBox="0 0 1000 474"><g fill="none" stroke-linecap="round" stroke-linejoin="round"><g stroke="#2a282c" stroke-width="5.4" opacity="0.85"><circle cx="888.8" cy="461.2" r="2.3"/><path d="M887.5 465L884 473.5h7M896 464.5H922M907 464.5L901.5 474M919 466V474M925 468l5.5-6.5 6 6.5M926 468.5V474M936.5 468.5V474M927 470h9"/></g><g stroke="#f4f4f4" stroke-width="3.3"><circle cx="888.8" cy="461.2" r="2.3"/><path d="M887.5 465L884 473.5h7M896 464.5H922M907 464.5L901.5 474M919 466V474M925 468l5.5-6.5 6 6.5M926 468.5V474M936.5 468.5V474M927 470h9"/></g></g></svg>
</body></html>
